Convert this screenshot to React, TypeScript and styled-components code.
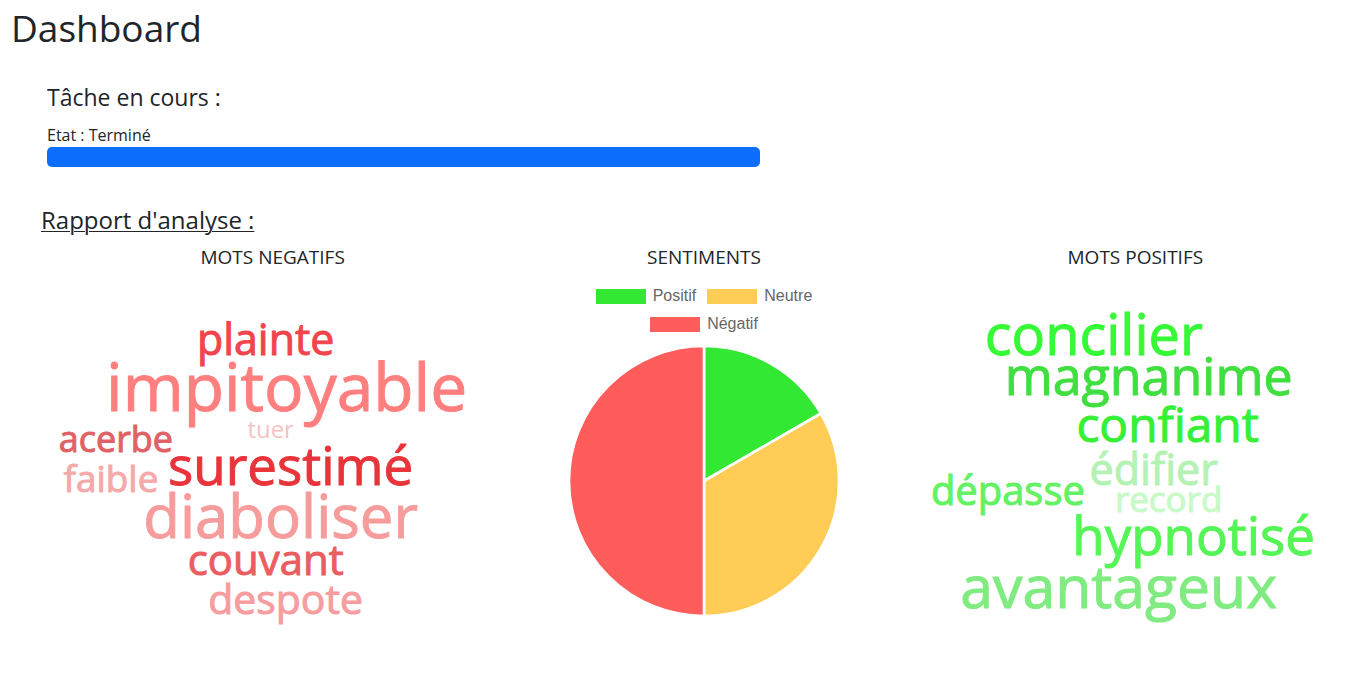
import React from "react";
import styled, { createGlobalStyle } from "styled-components";

const GlobalStyle = createGlobalStyle`
  *, *::before, *::after { box-sizing: border-box; }
  body {
    margin: 0;
    background: #fff;
    color: #212529;
    font-family: "Segoe UI", "Open Sans", "Noto Sans", sans-serif;
    font-size: 16px;
    line-height: 24px;
  }
`;

const Page = styled.main`
  padding-top: 4px;
`;

const PageTitle = styled.h1`
  margin: 0 0 31px;
  padding-left: 11px;
  font-size: 37px;
  font-weight: 400;
  line-height: 48px;
`;

const TaskSection = styled.section`
  padding: 0 3px 0 47px;
`;

const SectionTitle = styled.h2<{ $underlined?: boolean }>`
  margin: 0;
  font-size: ${(p) => (p.$underlined ? 24 : 23)}px;
  font-weight: 400;
  line-height: 28px;
  text-decoration: ${(p) => (p.$underlined ? "underline" : "none")};
  text-decoration-thickness: 1px;
  text-underline-offset: 2px;
`;

const TaskState = styled.p`
  margin: 12px 0 0;
`;

const ProgressTrack = styled.div`
  width: 55%;
  height: 20px;
  border-radius: 5px;
  background: #e9ecef;
  overflow: hidden;
`;

const ProgressFill = styled.div`
  height: 100%;
  background: #0d6efd;
`;

const ReportSection = styled.section`
  margin-top: 39px;
  padding-left: 41px;
`;

const ReportGrid = styled.div`
  display: grid;
  grid-template-columns: repeat(3, minmax(0, 1fr));
  gap: 22px;
  margin-top: 11px;
  padding: 0 7px 0 27px;
`;

const Panel = styled.article`
  display: flex;
  flex-direction: column;
  align-items: center;
`;

const PanelTitle = styled.h3`
  margin: 0;
  font-size: 19px;
  font-weight: 400;
  line-height: 24px;
  text-transform: uppercase;
`;

const Cloud = styled.svg`
  display: block;
  width: 100%;
  margin-top: 31px;
  overflow: visible;
  font-family: "Trebuchet MS", "Open Sans", "Noto Sans", sans-serif;
  font-variant-ligatures: none;
  text-anchor: middle;
`;

const CloudWord = styled.text<{ $size: number; $color: string }>`
  fill: ${(p) => p.$color};
  stroke: ${(p) => p.$color};
  stroke-width: ${(p) => (p.$size > 30 ? 1 : 0)}px;
  font-size: ${(p) => p.$size}px;
`;

const Legend = styled.ul`
  display: flex;
  flex-wrap: wrap;
  justify-content: center;
  column-gap: 11px;
  width: 250px;
  margin: 13px 0 8px;
  padding: 0;
  list-style: none;
`;

const LegendItem = styled.li`
  display: flex;
  align-items: center;
  gap: 7px;
  height: 28px;
  color: #666;
  font-family: "Liberation Sans", Arial, sans-serif;
  font-size: 16px;
`;

const Swatch = styled.span<{ $color: string }>`
  width: 50px;
  height: 15px;
  background: ${(p) => p.$color};
`;

const Pie = styled.svg`
  display: block;
  width: 270px;
  max-width: 100%;
`;

type Word = { text: string; size: number; x: number; y: number; color: string };

const negativeWords: Word[] = [
  { text: "plainte", size: 43, x: 198, y: 55, color: "#f2444b" },
  { text: "impitoyable", size: 66, x: 219, y: 111, color: "#ff7f7f" },
  { text: "acerbe", size: 36, x: 48, y: 152, color: "#e06266" },
  { text: "tuer", size: 24, x: 203, y: 138, color: "#f5c3c3" },
  { text: "faible", size: 37, x: 43, y: 192, color: "#f5aaaa" },
  { text: "surestimé", size: 53, x: 223, y: 185, color: "#e8343a" },
  { text: "diaboliser", size: 60, x: 213, y: 238, color: "#f79c9c" },
  { text: "couvant", size: 42, x: 198, y: 275, color: "#ea5d61" },
  { text: "despote", size: 41, x: 218, y: 315, color: "#f79c9f" },
];

const positiveWords: Word[] = [
  { text: "concilier", size: 56, x: 163, y: 55, color: "#35fa35" },
  { text: "magnanime", size: 52, x: 218, y: 95, color: "#3fdf3f" },
  { text: "confiant", size: 48, x: 237, y: 142, color: "#35f035" },
  { text: "édifier", size: 43, x: 223, y: 185, color: "#b4f2b4" },
  { text: "record", size: 35, x: 238, y: 212, color: "#c8fac8" },
  { text: "dépasse", size: 40, x: 77, y: 205, color: "#63f263" },
  { text: "hypnotisé", size: 53, x: 263, y: 255, color: "#55f555" },
  { text: "avantageux", size: 59, x: 188, y: 308, color: "#80eb80" },
];

type Slice = { label: string; value: number; color: string };

const slices: Slice[] = [
  { label: "Positif", value: 1, color: "#33e833" },
  { label: "Neutre", value: 2, color: "#ffcd56" },
  { label: "Négatif", value: 3, color: "#ff5c5c" },
];

function WordCloud({ words, label }: { words: Word[]; label: string }) {
  return (
    <Cloud viewBox="0 0 410 340" role="img" aria-label={label}>
      {words.map((w) => (
        <CloudWord key={w.text} x={w.x} y={w.y} $size={w.size} $color={w.color}>
          {w.text}
        </CloudWord>
      ))}
    </Cloud>
  );
}

function PieChart({ data }: { data: Slice[] }) {
  const total = data.reduce((sum, s) => sum + s.value, 0);
  const c = 135;
  const r = 135;
  const point = (t: number) => {
    const a = t * 2 * Math.PI - Math.PI / 2;
    return `${c + r * Math.cos(a)} ${c + r * Math.sin(a)}`;
  };
  let start = 0;
  return (
    <Pie viewBox="0 0 270 270" role="img" aria-label="Sentiments">
      {data.map((s) => {
        const from = start;
        start += s.value / total;
        const large = s.value / total > 0.5 ? 1 : 0;
        return (
          <path
            key={s.label}
            d={`M${c} ${c} L${point(from)} A${r} ${r} 0 ${large} 1 ${point(start)} Z`}
            fill={s.color}
            stroke="#fff"
            strokeWidth={2.6}
            strokeLinejoin="bevel"
          />
        );
      })}
    </Pie>
  );
}

export default function App() {
  const progress = 100;
  return (
    <>
      <GlobalStyle />
      <Page>
        <PageTitle>Dashboard</PageTitle>
        <TaskSection>
          <SectionTitle>Tâche en cours :</SectionTitle>
          <TaskState id="task-state">Etat : Terminé</TaskState>
          <ProgressTrack
            role="progressbar"
            aria-labelledby="task-state"
            aria-valuemin={0}
            aria-valuemax={100}
            aria-valuenow={progress}
          >
            <ProgressFill style={{ width: `${progress}%` }} />
          </ProgressTrack>
        </TaskSection>
        <ReportSection>
          <SectionTitle $underlined>Rapport d'analyse :</SectionTitle>
          <ReportGrid>
            <Panel>
              <PanelTitle>Mots negatifs</PanelTitle>
              <WordCloud words={negativeWords} label="Mots négatifs" />
            </Panel>
            <Panel>
              <PanelTitle>Sentiments</PanelTitle>
              <Legend>
                {slices.map((s) => (
                  <LegendItem key={s.label}>
                    <Swatch $color={s.color} />
                    {s.label}
                  </LegendItem>
                ))}
              </Legend>
              <PieChart data={slices} />
            </Panel>
            <Panel>
              <PanelTitle>Mots positifs</PanelTitle>
              <WordCloud words={positiveWords} label="Mots positifs" />
            </Panel>
          </ReportGrid>
        </ReportSection>
      </Page>
    </>
  );
}
